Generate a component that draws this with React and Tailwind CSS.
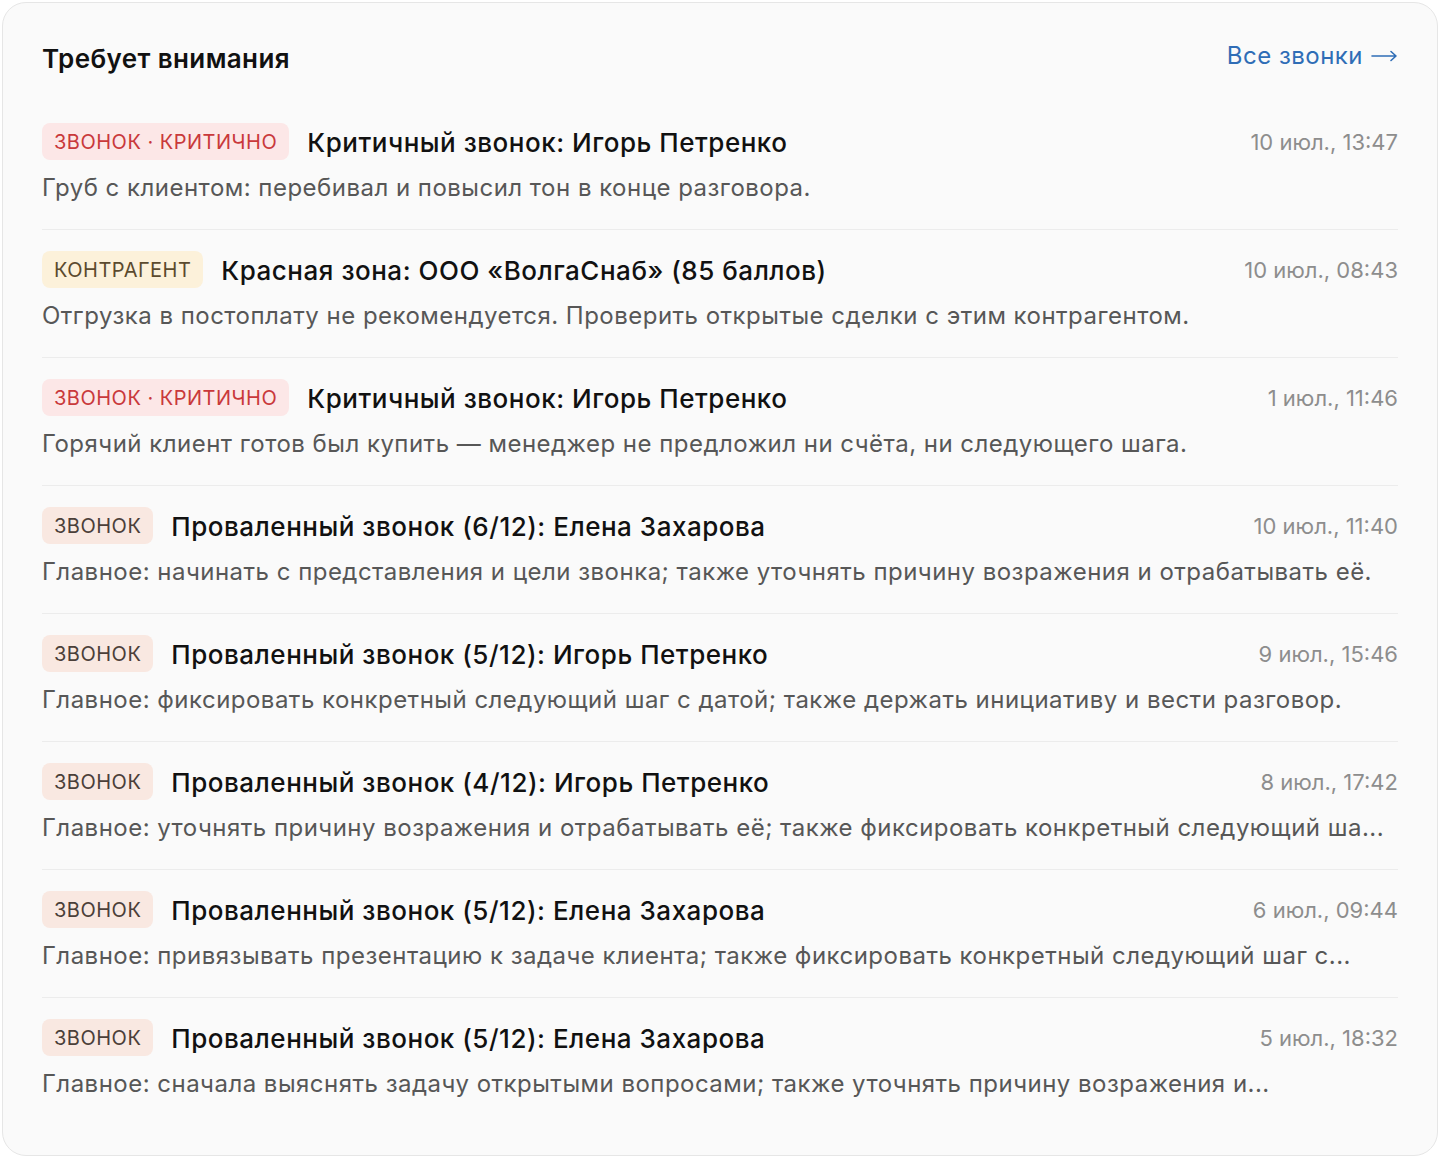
import React from 'react';

// Badge palette per item kind
const badgeStyles = {
  critical: 'bg-[#fce7e7] text-[#c9393b]',
  partner: 'bg-[#fcf1da] text-[#5b4a2e]',
  call: 'bg-[#f9e8e1] text-[#4b3f39]',
};

const items = [
  {
    kind: 'critical',
    badge: 'Звонок · Критично',
    title: 'Критичный звонок: Игорь Петренко',
    date: '10 июл., 13:47',
    text: 'Груб с клиентом: перебивал и повысил тон в конце разговора.',
  },
  {
    kind: 'partner',
    badge: 'Контрагент',
    title: 'Красная зона: ООО «ВолгаСнаб» (85 баллов)',
    date: '10 июл., 08:43',
    text: 'Отгрузка в постоплату не рекомендуется. Проверить открытые сделки с этим контрагентом.',
  },
  {
    kind: 'critical',
    badge: 'Звонок · Критично',
    title: 'Критичный звонок: Игорь Петренко',
    date: '1 июл., 11:46',
    text: 'Горячий клиент готов был купить — менеджер не предложил ни счёта, ни следующего шага.',
  },
  {
    kind: 'call',
    badge: 'Звонок',
    title: 'Проваленный звонок (6/12): Елена Захарова',
    date: '10 июл., 11:40',
    text: 'Главное: начинать с представления и цели звонка; также уточнять причину возражения и отрабатывать её.',
  },
  {
    kind: 'call',
    badge: 'Звонок',
    title: 'Проваленный звонок (5/12): Игорь Петренко',
    date: '9 июл., 15:46',
    text: 'Главное: фиксировать конкретный следующий шаг с датой; также держать инициативу и вести разговор.',
  },
  {
    kind: 'call',
    badge: 'Звонок',
    title: 'Проваленный звонок (4/12): Игорь Петренко',
    date: '8 июл., 17:42',
    text: 'Главное: уточнять причину возражения и отрабатывать её; также фиксировать конкретный следующий ша...',
  },
  {
    kind: 'call',
    badge: 'Звонок',
    title: 'Проваленный звонок (5/12): Елена Захарова',
    date: '6 июл., 09:44',
    text: 'Главное: привязывать презентацию к задаче клиента; также фиксировать конкретный следующий шаг с...',
  },
  {
    kind: 'call',
    badge: 'Звонок',
    title: 'Проваленный звонок (5/12): Елена Захарова',
    date: '5 июл., 18:32',
    text: 'Главное: сначала выяснять задачу открытыми вопросами; также уточнять причину возражения и...',
  },
];

const AttentionRow = ({ item, first }) => (
  <div className={`pt-[21px] pb-[26px] ${first ? '' : 'border-t border-[#ececec]'}`}>
    <div className="flex items-center h-[37px]">
      <span
        className={`h-[37px] px-3 rounded-lg flex items-center uppercase text-[20px] leading-none tracking-[0.025em] ${badgeStyles[item.kind]}`}
      >
        {item.badge}
      </span>
      <span className="ml-[18px] mt-[2px] text-[26px] leading-[37px] font-medium tracking-[0.02em] text-[#111]">
        {item.title}
      </span>
      <span className="ml-auto mt-[2px] text-[22px] leading-[37px] text-[#8d8d8d]">{item.date}</span>
    </div>
    <p className="mt-[12px] -mb-[1px] leading-[32px] text-[24px] tracking-[0.02em] text-[#575757]">{item.text}</p>
  </div>
);

export default function App() {
  return (
    <div className="min-h-[1158px] bg-white p-[2px] font-['Inter',sans-serif]">
      <div className="h-[1154px] rounded-[24px] border border-[#e6e6e6] bg-[#fafafa] pt-[37px] px-[39px]">
        <div className="flex items-center justify-between h-[36px] mb-[26px]">
          <h2 className="text-[26px] font-semibold tracking-[0.015em] text-[#111]">Требует внимания</h2>
          <a className="flex items-center gap-[8px] text-[24px] tracking-[0.02em] text-[#2f6db6] -mt-[4px]">
            Все звонки
            <svg width="27" height="12" viewBox="0 0 27 12" fill="none" stroke="currentColor" strokeWidth="1.6" strokeLinecap="round" strokeLinejoin="round">
              <path d="M1 6h24M20 1.5 25 6l-5 4.5" />
            </svg>
          </a>
        </div>
        <div>
          {items.map((item, i) => (
            <AttentionRow key={i} item={item} first={i === 0} />
          ))}
        </div>
      </div>
    </div>
  );
}
